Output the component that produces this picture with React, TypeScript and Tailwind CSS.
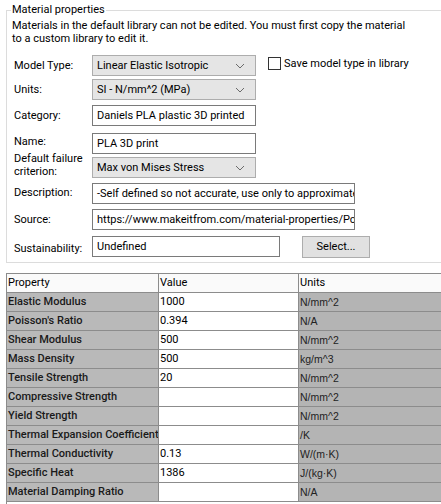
import React from 'react';

const rows = [
  ['Elastic Modulus', '1000', 'N/mm^2'],
  ["Poisson's Ratio", '0.394', 'N/A'],
  ['Shear Modulus', '500', 'N/mm^2'],
  ['Mass Density', '500', 'kg/m^3'],
  ['Tensile Strength', '20', 'N/mm^2'],
  ['Compressive Strength', '', 'N/mm^2'],
  ['Yield Strength', '', 'N/mm^2'],
  ['Thermal Expansion Coefficient', '', '/K'],
  ['Thermal Conductivity', '0.13', 'W/(m·K)'],
  ['Specific Heat', '1386', 'J/(kg·K)'],
  ['Material Damping Ratio', '', 'N/A'],
];

function Chevron() {
  return (
    <svg width="10" height="6" viewBox="0 0 10 6" className="mr-[10px]">
      <path d="M1 1 L5 5 L9 1" fill="none" stroke="#6b6b6b" strokeWidth="1" />
    </svg>
  );
}

function Select({ value }: { value: string }) {
  return (
    <div className="w-[164px] h-[21px] shrink-0 bg-[#e5e5e5] border border-[#adadad] flex items-center justify-between pl-[4px]">
      <span>{value}</span>
      <Chevron />
    </div>
  );
}

function Input({ value, w }: { value: string; w: string }) {
  return (
    <div className={`${w} h-[21px] shrink-0 bg-white border border-[#7a7a7a] flex items-center pl-[4px] overflow-hidden whitespace-nowrap`}>
      {value}
    </div>
  );
}

export default function App() {
  return (
    <div className="w-[441px] h-[504px] bg-white overflow-hidden text-[11px] text-black font-['Roboto',sans-serif] leading-[14px]">
      <div className="pt-[10px] pl-[6px]">
        <div className="relative border border-[#dcdcdc] border-r-0 h-[253px] pl-[5px]">
          <div className="absolute left-[4px] top-[-8px] bg-white px-[1px]">Material properties</div>
          <div className="pt-[8px] w-[394px] leading-[13px]">
            Materials in the default library can not be edited. You must first copy the material to a custom library to edit it.
          </div>
          <div className="pl-[2px] mt-[10px]">
            <div className="flex items-center">
              <div className="w-[78px]">Model Type:</div>
              <Select value="Linear Elastic Isotropic" />
              <div className="flex items-center ml-[12px] mb-[4px]">
                <div className="w-[13px] h-[13px] border border-[#333] bg-white mr-[3px]" />
                <span>Save model type in library</span>
              </div>
            </div>
            <div className="flex items-center mt-[3px]">
              <div className="w-[78px]">Units:</div>
              <Select value="SI - N/mm^2 (MPa)" />
            </div>
            <div className="flex items-center mt-[5px]">
              <div className="w-[78px]">Category:</div>
              <Input w="w-[164px]" value="Daniels PLA plastic 3D printed" />
            </div>
            <div className="flex items-center mt-[7px]">
              <div className="w-[78px] mt-[-4px]">Name:</div>
              <Input w="w-[164px]" value="PLA 3D print" />
            </div>
            <div className="flex items-start mt-[3px] h-[21px]">
              <div className="w-[78px] leading-[13px] whitespace-nowrap mt-[-5px]">
                Default failure
                <br />
                criterion:
              </div>
              <Select value="Max von Mises Stress" />
            </div>
            <div className="flex items-center mt-[5px]">
              <div className="w-[78px] mt-[-2px]">Description:</div>
              <Input w="w-[263px]" value="-Self defined so not accurate, use only to approximate" />
            </div>
            <div className="flex items-center mt-[5px]">
              <div className="w-[78px]">Source:</div>
              <Input w="w-[263px]" value="https://www.makeitfrom.com/material-properties/Polylactic-Acid" />
            </div>
            <div className="flex items-start mt-[6px]">
              <div className="w-[78px] h-[21px] flex items-center mt-[2px]">Sustainability:</div>
              <Input w="w-[188px]" value="Undefined" />
              <div className="ml-[22px] w-[68px] h-[22px] bg-[#e1e1e1] border border-[#adadad] flex items-center justify-center">
                Select...
              </div>
            </div>
          </div>
        </div>
      </div>
      <div className="pl-[6px] mt-[10px]">
        <table className="border-collapse w-[440px] table-fixed">
          <colgroup>
            <col className="w-[152px]" />
            <col className="w-[140px]" />
            <col />
          </colgroup>
          <thead>
            <tr className="h-[19px]">
              <th className="border border-[#8c8c8c] bg-[#fafafa] text-left font-normal pl-[1px]">Property</th>
              <th className="border border-[#8c8c8c] bg-[#fafafa] text-left font-normal pl-[1px]">Value</th>
              <th className="border border-[#8c8c8c] bg-[#fafafa] text-left font-normal pl-[1px]">Units</th>
            </tr>
          </thead>
          <tbody>
            {rows.map(r => (
              <tr key={r[0]} className="h-[19px]">
                <td className="border border-[#8c8c8c] bg-[#b9b9b9] pl-[1px] font-medium whitespace-nowrap overflow-hidden text-[#1a1a1a]">{r[0]}</td>
                <td className="border border-[#8c8c8c] bg-white pl-[1px]">{r[1]}</td>
                <td className="border border-[#8c8c8c] bg-[#b4b4b4] pl-[1px] text-[10.5px] font-['Liberation_Sans',sans-serif] text-[#222]">{r[2]}</td>
              </tr>
            ))}
            <tr className="h-[19px]">
              <td className="border border-[#8c8c8c] bg-white" colSpan={3}></td>
            </tr>
          </tbody>
        </table>
      </div>
    </div>
  );
}
